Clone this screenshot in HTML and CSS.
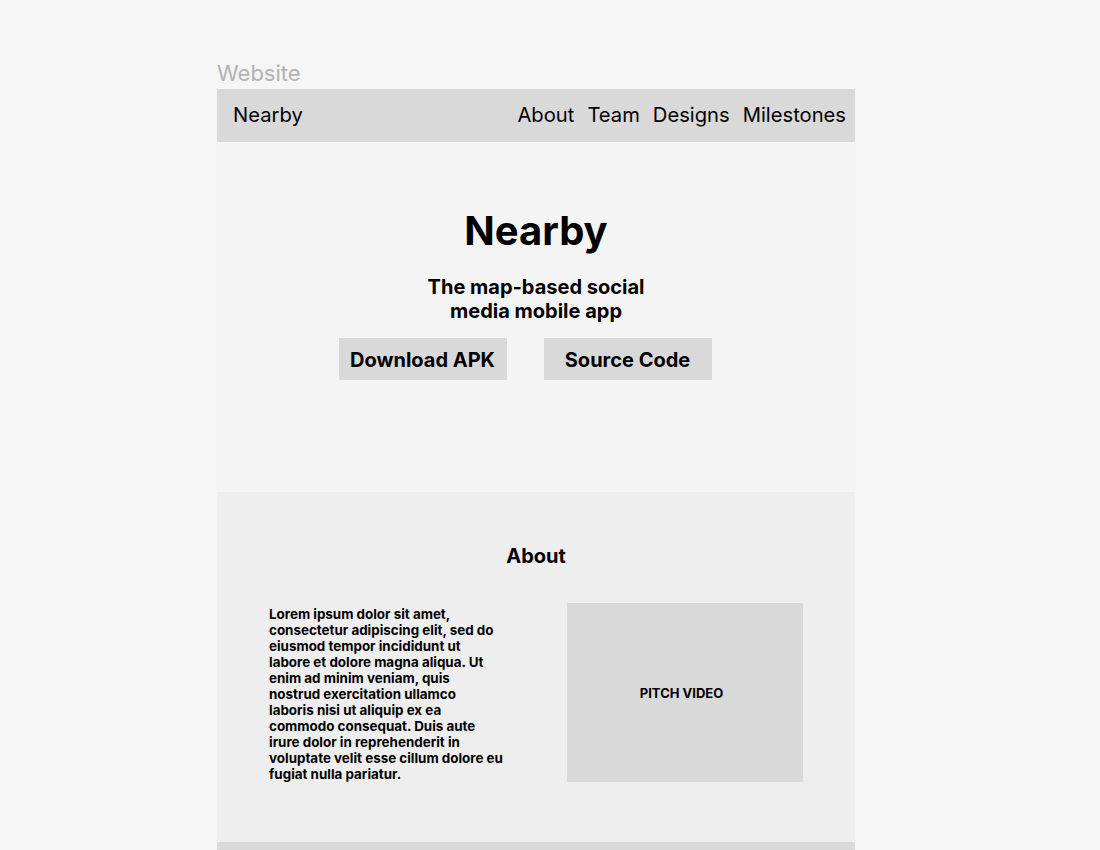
FILE: index.html
```html
<!DOCTYPE html>
<html lang="en">
<head>
<meta charset="utf-8">
<title>Website</title>
<link rel="stylesheet" href="styles.css">
</head>
<body>
<div class="canvas">
  <div class="frame-label">Website</div>
  <div class="frame">
    <header class="nav">
      <div class="brand">Nearby</div>
      <nav class="links">
        <span>About</span>
        <span>Team</span>
        <span>Designs</span>
        <span>Milestones</span>
      </nav>
    </header>
    <section class="hero">
      <h1 class="hero-title">Nearby</h1>
      <p class="hero-sub">The map-based social<br>media mobile app</p>
      <div class="hero-buttons">
        <div class="btn">Download APK</div>
        <div class="btn">Source Code</div>
      </div>
    </section>
    <section class="about">
      <h2 class="about-title">About</h2>
      <div class="about-row">
        <p class="about-text">Lorem ipsum dolor sit amet,<br>consectetur adipiscing elit, sed do<br>eiusmod tempor incididunt ut<br>labore et dolore magna aliqua. Ut<br>enim ad minim veniam, quis<br>nostrud exercitation ullamco<br>laboris nisi ut aliquip ex ea<br>commodo consequat. Duis aute<br>irure dolor in reprehenderit in<br>voluptate velit esse cillum dolore eu<br>fugiat nulla pariatur.</p>
        <div class="video">PITCH VIDEO</div>
      </div>
    </section>
    <footer class="footer"></footer>
  </div>
</div>
</body>
</html>
```
FILE: styles.css
```css
html, body {
  margin: 0;
  padding: 0;
  background: #f5f5f5;
  font-family: Inter, "Noto Sans", sans-serif;
  color: #000;
  overflow: hidden;
}
.canvas {
  width: 638px;
  margin-left: 217px;
  padding-top: 61px;
}
.frame-label {
  font-size: 22px;
  line-height: 24px;
  color: #b3b3b3;
  margin-bottom: 4px;
}
.nav {
  height: 53px;
  background: #d9d9d9;
  display: flex;
  align-items: center;
  justify-content: space-between;
  padding: 0 9px 2px 16px;
  box-sizing: border-box;
  font-size: 20.2px;
  line-height: 24px;
}
.links {
  display: flex;
  gap: 13px;
}
.hero {
  background: #f5f4f4;
  padding: 65px 0 112px;
  display: flex;
  flex-direction: column;
  align-items: center;
}
.hero-title {
  margin: 0;
  font-size: 40px;
  line-height: 48px;
  font-weight: 700;
}
.hero-sub {
  margin: 20px 0 0;
  font-size: 20px;
  line-height: 24px;
  font-weight: 700;
  text-align: center;
}
.hero-buttons {
  margin-top: 15px;
  display: flex;
  gap: 37px;
  padding-right: 22px;
}
.btn {
  width: 168px;
  height: 42px;
  background: #d9d9d9;
  display: flex;
  align-items: center;
  justify-content: center;
  font-size: 20px;
  font-weight: 700;
  padding-top: 1px;
  box-sizing: border-box;
}
.about {
  background: #efeeef;
  padding: 52px 52px 60px;
}
.about-title {
  margin: 0;
  text-align: center;
  font-size: 20px;
  line-height: 24px;
  font-weight: 700;
}
.about-row {
  margin-top: 35px;
  display: flex;
  align-items: center;
  justify-content: space-between;
}
.about-text {
  margin: 3px 0 0;
  width: 250px;
  font-size: 13.4px;
  line-height: 16px;
  font-weight: 700;
  white-space: nowrap;
}
.video {
  width: 236px;
  height: 179px;
  background: #d9d9d9;
  display: flex;
  align-items: center;
  justify-content: center;
  font-size: 13px;
  font-weight: 700;
  padding-right: 7px;
  box-sizing: border-box;
}
.footer {
  height: 40px;
  background: #d9d9d9;
}
```
